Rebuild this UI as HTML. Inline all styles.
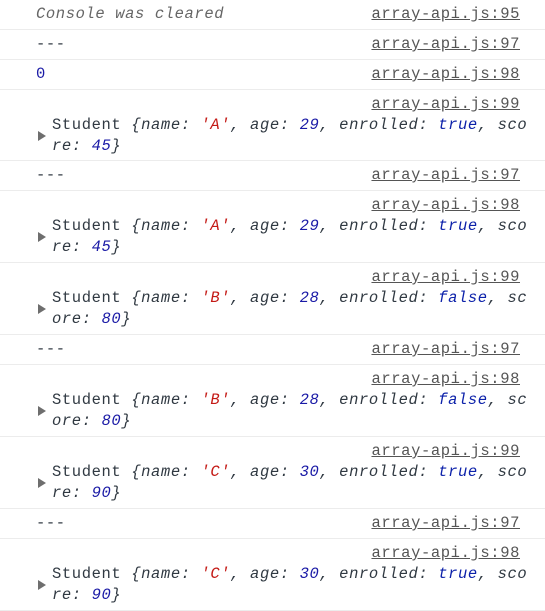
<!DOCTYPE html>
<html><head><meta charset="utf-8"><style>
body{margin:0;width:545px;height:611px;background:#fff;overflow:hidden;font-family:"Liberation Mono","DejaVu Sans Mono",monospace;font-size:15.5px;letter-spacing:0.6px;color:#303942}
.r{position:relative;border-bottom:1px solid #ececec;box-sizing:border-box;padding-top:4px}
.s{height:30px}.t{height:72px}.t1{height:71px}
.l{position:absolute;right:25px;top:4px;line-height:21px;color:#555;text-decoration:underline}
.m{line-height:21px;padding-left:36px}
.o{padding-left:52px;line-height:21px;width:480px;word-break:break-all;position:relative;margin-top:21px}
.o i{font-style:italic}
.a{position:absolute;left:38px;top:16px;width:0;height:0;border-top:5px solid transparent;border-bottom:5px solid transparent;border-left:8px solid #6e6e6e}
.str{color:#c41a16;font-style:italic}.num{color:#1a1aa6;font-style:italic}.b{color:#0d22aa;font-style:italic}
.g{color:#666;font-style:italic}
</style></head><body>
<div class="r s"><div class="m g">Console was cleared</div><span class="l">array-api.js:95</span></div>
<div class="r s"><div class="m">---</div><span class="l">array-api.js:97</span></div>
<div class="r s"><div class="m num" style="font-style:normal">0</div><span class="l">array-api.js:98</span></div>
<div class="r t1"><span class="l">array-api.js:99</span><div class="o"><span class="a"></span>Student <i>{name: <span class="str">'A'</span>, age: <span class="num">29</span>, enrolled: <span class="b">true</span>, score: <span class="num">45</span>}</i></div></div>
<div class="r s"><div class="m">---</div><span class="l">array-api.js:97</span></div>
<div class="r t"><span class="l">array-api.js:98</span><div class="o"><span class="a"></span>Student <i>{name: <span class="str">'A'</span>, age: <span class="num">29</span>, enrolled: <span class="b">true</span>, score: <span class="num">45</span>}</i></div></div>
<div class="r t"><span class="l">array-api.js:99</span><div class="o"><span class="a"></span>Student <i>{name: <span class="str">'B'</span>, age: <span class="num">28</span>, enrolled: <span class="b">false</span>, score: <span class="num">80</span>}</i></div></div>
<div class="r s"><div class="m">---</div><span class="l">array-api.js:97</span></div>
<div class="r t"><span class="l">array-api.js:98</span><div class="o"><span class="a"></span>Student <i>{name: <span class="str">'B'</span>, age: <span class="num">28</span>, enrolled: <span class="b">false</span>, score: <span class="num">80</span>}</i></div></div>
<div class="r t"><span class="l">array-api.js:99</span><div class="o"><span class="a"></span>Student <i>{name: <span class="str">'C'</span>, age: <span class="num">30</span>, enrolled: <span class="b">true</span>, score: <span class="num">90</span>}</i></div></div>
<div class="r s"><div class="m">---</div><span class="l">array-api.js:97</span></div>
<div class="r t"><span class="l">array-api.js:98</span><div class="o"><span class="a"></span>Student <i>{name: <span class="str">'C'</span>, age: <span class="num">30</span>, enrolled: <span class="b">true</span>, score: <span class="num">90</span>}</i></div></div>
</body></html>
